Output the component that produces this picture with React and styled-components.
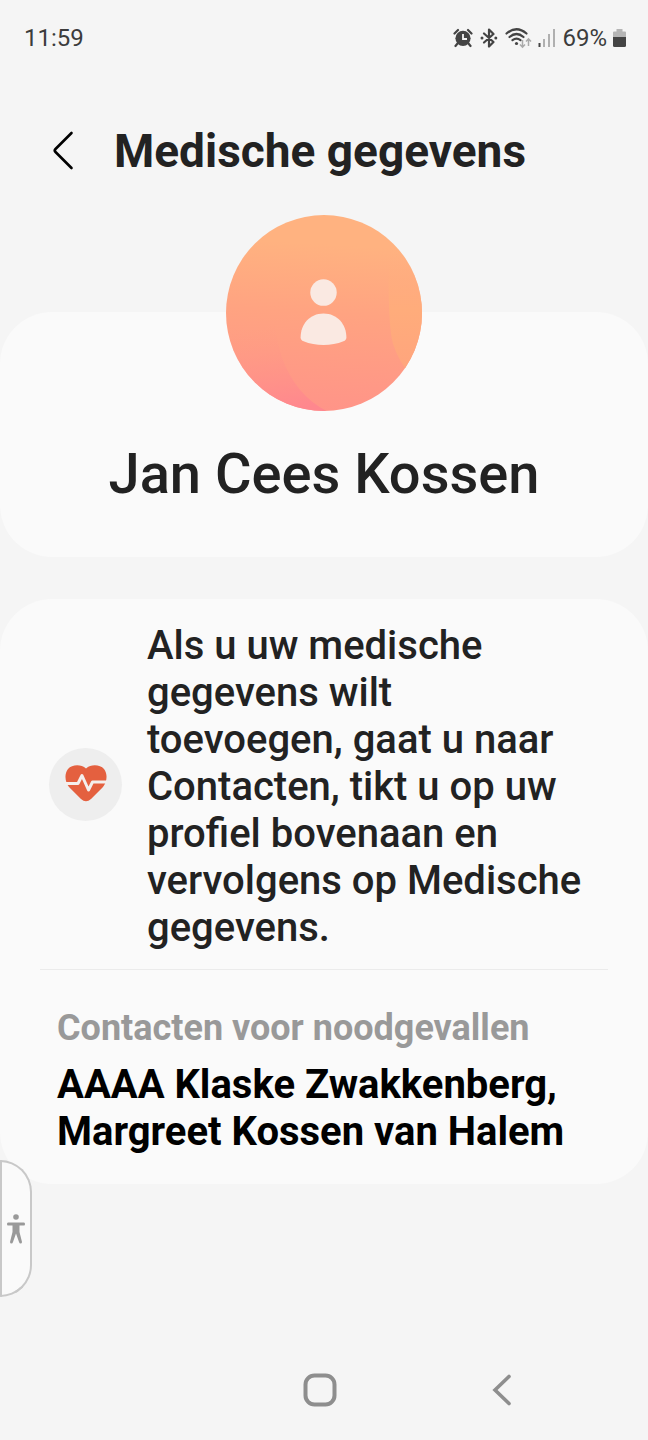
import React from 'react';
import styled, { createGlobalStyle } from 'styled-components';

const GlobalStyle = createGlobalStyle`
    * { box-sizing: border-box; }
    body {
        margin: 0;
        background: #f5f5f5;
        color: #222;
        font-family: Roboto, "Liberation Sans", sans-serif;
    }
    button {
        border: 0;
        padding: 0;
        background: none;
        font: inherit;
        cursor: pointer;
    }
    svg { display: block; }
`;

const Screen = styled.div`
    position: relative;
    display: flex;
    flex-direction: column;
    min-height: 100vh;
`;

const StatusBar = styled.div`
    display: flex;
    align-items: center;
    justify-content: space-between;
    height: 75px;
    padding: 0 22px 0 24px;
    color: #3c3c3c;
    font-size: 24px;
`;

const StatusIcons = styled.div`
    display: flex;
    align-items: center;
    gap: 6px;
`;

const Header = styled.header`
    display: flex;
    align-items: center;
    gap: 38px;
    height: 152px;
    padding: 0 48px;
`;

const BackButton = styled.button`
    width: 28px;
    height: 40px;
`;

const Title = styled.h1`
    margin: 0;
    font-size: 46px;
    font-weight: 700;
    line-height: 56px;
`;

const Card = styled.section`
    border-radius: 52px;
    background: #fafafa;
`;

const ProfileCard = styled(Card)`
    display: flex;
    flex-direction: column;
    align-items: center;
    margin-top: 85px;
    padding-bottom: 50px;
`;

const Avatar = styled.div`
    width: 196px;
    height: 196px;
    margin-top: -97px;
`;

const Name = styled.h2`
    margin: 30px 0 0;
    font-size: 56px;
    font-weight: 500;
    line-height: 66px;
`;

const InfoCard = styled(Card)`
    margin-top: 42px;
    padding: 0 40px 29px;
`;

const MedicalRow = styled.div`
    display: flex;
    align-items: center;
    gap: 25px;
    padding: 0 16px 0 9px;
    border-bottom: 1px solid #ebebeb;
`;

const IconBadge = styled.div`
    display: flex;
    flex: none;
    align-items: center;
    justify-content: center;
    width: 73px;
    height: 73px;
    border-radius: 50%;
    background: #eee;
`;

const MedicalText = styled.p`
    margin: 0;
    padding: 23px 0 18px;
    font-size: 40px;
    font-weight: 500;
    line-height: 47px;
`;

const Contacts = styled.div`
    padding: 37px 17px 0;
`;

const ContactsLabel = styled.h3`
    margin: 0 0 12px;
    color: #999;
    font-size: 36px;
    font-weight: 700;
    line-height: 42px;
`;

const ContactNames = styled.p`
    margin: 0;
    color: #000;
    font-size: 40px;
    font-weight: 700;
    line-height: 47px;
`;

const AccessibilityHandle = styled.button`
    position: absolute;
    bottom: 143px;
    left: 0;
    display: flex;
    align-items: center;
    justify-content: center;
    width: 32px;
    height: 137px;
    && {
        border: 2px solid #c8c8c8;
        border-radius: 0 32px 32px 0;
        background: #fafafa;
    }
`;

const NavBar = styled.nav`
    display: grid;
    grid-template-columns: repeat(3, 182px);
    align-items: center;
    justify-content: center;
    height: 100px;
    margin-top: auto;
    padding-right: 8px;
`;

const NavButton = styled.button`
    display: flex;
    grid-column: ${props => props.$column};
    justify-content: center;
`;

const AlarmIcon = () => (
    <svg width="20" height="20" viewBox="0 0 20 20" aria-hidden="true">
        <path d="M1.500 5.500 5 2M18.500 5.500 15 2M4.500 15.500 2.500 18M15.500 15.500l2 2.500" stroke="#444" strokeWidth="2.200" strokeLinecap="round" />
        <circle cx="10" cy="10.300" r="7.600" fill="#444" />
        <path d="M10 6v5h4" fill="none" stroke="#f5f5f5" strokeWidth="1.800" />
    </svg>
);

const BluetoothIcon = () => (
    <svg width="20" height="20" viewBox="0 0 20 20" aria-hidden="true">
        <path d="M5 5.500 14.500 14 10 18.500V1.500L14.500 6 5 14.500" fill="none" stroke="#444" strokeWidth="2.200" strokeLinejoin="round" strokeLinecap="round" />
        <circle cx="3" cy="10" r="1.500" fill="#444" />
        <circle cx="16.800" cy="10" r="1.500" fill="#444" />
    </svg>
);

const WifiIcon = () => (
    <svg width="27" height="22" viewBox="0 0 27 22" aria-hidden="true">
        <path d="M1.500 6.500q10-8.500 20 0M4.500 10q7-6 14 0M7.500 13.200q4-3.200 8 0" fill="none" stroke="#444" strokeWidth="2.200" strokeLinecap="round" />
        <circle cx="11.500" cy="16.500" r="1.600" fill="#444" />
        <path d="M17.500 13v7M15 17.500l2.500 2.700 2.500-2.700M23.500 19v-7M21 14.500l2.500-2.700 2.500 2.700" fill="none" stroke="#aaa" strokeWidth="1.500" />
    </svg>
);

const SignalIcon = () => (
    <svg width="18" height="20" viewBox="0 0 18 20" aria-hidden="true">
        <path d="M1.500 15v4" stroke="#444" strokeWidth="2" />
        <path d="M6 11v8M11 6v13M16 1v18" stroke="#b0b0b0" strokeWidth="2" />
    </svg>
);

const BatteryIcon = () => (
    <svg width="13" height="20" viewBox="0 0 13 20" aria-hidden="true">
        <path d="M3.500 1h6v2.500H12q1 0 1 1V9H0V4.500q0-1 1-1h2.500z" fill="#b5b5b5" />
        <path d="M0 9h13v8.500q0 1.500-1.500 1.500h-10Q0 19 0 17.500z" fill="#444" />
    </svg>
);

const AvatarPicture = () => (
    <svg width="100%" height="100%" viewBox="0 0 197 197" role="img" aria-label="Profielfoto">
        <defs>
            <linearGradient id="base" x1="0.530" y1="0" x2="0.470" y2="1">
                <stop offset="0.150" stopColor="#ffb280" />
                <stop offset="0.500" stopColor="#ffa381" />
                <stop offset="1" stopColor="#ff9488" />
            </linearGradient>
            <linearGradient id="left" gradientUnits="userSpaceOnUse" x1="55" y1="110" x2="65" y2="195">
                <stop offset="0" stopColor="#ff9c84" stopOpacity="0" />
                <stop offset="1" stopColor="#ff878e" />
            </linearGradient>
            <linearGradient id="right" x1="0" y1="0" x2="0" y2="1">
                <stop offset="0" stopColor="#ffb080" stopOpacity="0" />
                <stop offset="0.500" stopColor="#ffac7b" />
                <stop offset="1" stopColor="#ffa47d" />
            </linearGradient>
            <clipPath id="round"><circle cx="98.500" cy="98.500" r="98.500" /></clipPath>
        </defs>
        <g clipPath="url(#round)">
            <rect width="197" height="197" fill="url(#base)" />
            <path d="M0 0h46q-4 95 10 143 14 38 45 54H0z" fill="url(#left)" />
            <path d="M164 30q-2 80 4 100 6 18 17 30l20-20V30z" fill="url(#right)" />
        </g>
        <circle cx="98" cy="78" r="13.300" fill="#fae9e2" />
        <path d="M75 123c0-13 9-24 23-24s23 11 23 24c0 2-1 3-3 4-12 5-28 5-40 0-2-1-3-2-3-4z" fill="#fae9e2" />
    </svg>
);

const HeartIcon = () => (
    <svg width="42" height="38" viewBox="0 0 42 38" aria-hidden="true">
        <path d="M21 3.500C16-1 7-.5 3 4-1 9 0 17 4 22l12 12q5 4.500 10 0l12-12c4-5 5-13 1-18-4-4.500-13-5-18-.5z" fill="#e4603f" />
        <path d="M0 18.500h13l4-8 6.500 14.500 4-8H42" fill="none" stroke="#f4efed" strokeWidth="3" strokeLinejoin="round" />
    </svg>
);

const PersonIcon = () => (
    <svg width="18" height="30" viewBox="0 0 18 30" aria-hidden="true">
        <circle cx="9" cy="3" r="2.800" fill="#999" />
        <path d="M1 8.500h16q1 0 1 1.500t-1 1.500h-4.500V18L15 28q0 1.500-1.500 1.500-1 0-1.500-1.500L9 19.500 6 28q-.5 1.500-1.500 1.500Q3 29.500 3 28l2.500-10v-6.500H1q-1 0-1-1.500t1-1.500z" fill="#999" />
    </svg>
);

const App = () => (
    <Screen>
        <GlobalStyle />
        <StatusBar>
            <time>11:59</time>
            <StatusIcons>
                <AlarmIcon />
                <BluetoothIcon />
                <WifiIcon />
                <SignalIcon />
                <span>69%</span>
                <BatteryIcon />
            </StatusIcons>
        </StatusBar>

        <Header>
            <BackButton aria-label="Terug">
                <svg width="28" height="40" viewBox="0 0 28 40">
                    <path d="M23.500 2 7.500 18q-1.500 1.500 0 3l16 16" fill="none" stroke="#000" strokeWidth="2.600" strokeLinecap="round" />
                </svg>
            </BackButton>
            <Title>Medische gegevens</Title>
        </Header>

        <main>
            <ProfileCard>
                <Avatar><AvatarPicture /></Avatar>
                <Name>Jan Cees Kossen</Name>
            </ProfileCard>

            <InfoCard>
                <MedicalRow>
                    <IconBadge><HeartIcon /></IconBadge>
                    <MedicalText>
                        Als u uw medische gegevens wilt toevoegen, gaat u naar Contacten, tikt u op uw
                        profiel bovenaan en vervolgens op Medische gegevens.
                    </MedicalText>
                </MedicalRow>
                <Contacts>
                    <ContactsLabel>Contacten voor noodgevallen</ContactsLabel>
                    <ContactNames>AAAA Klaske Zwakkenberg, Margreet Kossen van Halem</ContactNames>
                </Contacts>
            </InfoCard>
        </main>

        <AccessibilityHandle aria-label="Toegankelijkheid">
            <PersonIcon />
        </AccessibilityHandle>

        <NavBar>
            <NavButton $column={2} aria-label="Startscherm">
                <svg width="34" height="34" viewBox="0 0 34 34">
                    <rect x="2.500" y="2.500" width="29" height="29" rx="9" fill="none" stroke="#8e8e8e" strokeWidth="4" />
                </svg>
            </NavButton>
            <NavButton $column={3} aria-label="Vorige">
                <svg width="20" height="32" viewBox="0 0 20 32">
                    <path d="M17 2.500 3 16l14 13.500" fill="none" stroke="#8e8e8e" strokeWidth="3.600" strokeLinecap="round" />
                </svg>
            </NavButton>
        </NavBar>
    </Screen>
);

export default App;
